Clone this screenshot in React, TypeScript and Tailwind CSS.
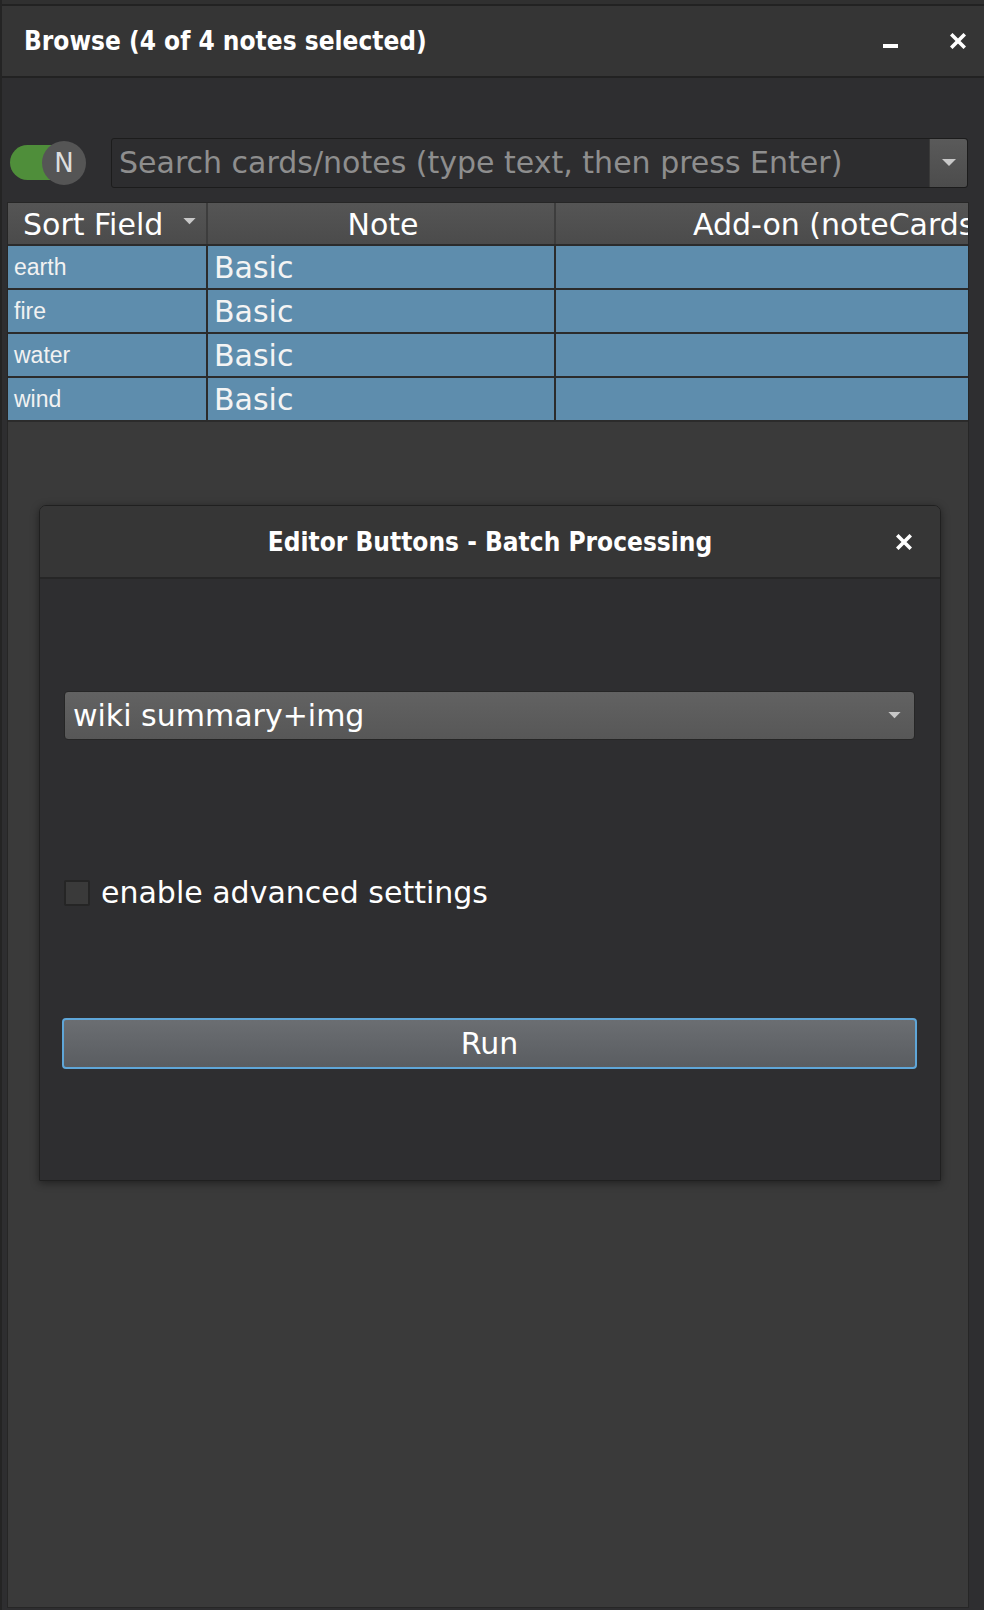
import React from "react";

const dv = "font-['DejaVu_Sans',sans-serif] leading-none";
const dvc = "font-['DejaVu_Sans_Condensed','DejaVu_Sans',sans-serif] font-stretch-condensed font-bold leading-none";

function XIcon({ className }: { className?: string }) {
  return (
    <svg viewBox="0 0 16 16" className={className} fill="none">
      <path d="M2.5 2.5 L13.5 13.5 M13.5 2.5 L2.5 13.5" stroke="#ffffff" strokeWidth="3.6" strokeLinecap="square" />
    </svg>
  );
}

function Tri({ className }: { className?: string }) {
  return (
    <svg viewBox="0 0 14 8" className={className}>
      <path d="M0 0 H14 L7 7 Z" fill="#c8c8c8" />
    </svg>
  );
}

const rows = ["earth", "fire", "water", "wind"];

export default function App() {
  return (
    <div className="w-[984px] h-[1610px] bg-[#2e2e30] flex flex-col overflow-hidden border-l-2 border-[#242424]">
      <div className="h-[4px] bg-[#303030]" />
      {/* Title bar */}
      <div className="h-[74px] border-y-2 border-[#222222] bg-[#353535] flex items-center pl-[22px] pr-[18px]">
        <div className={`${dvc} text-[26px] text-white flex-1`}>Browse (4 of 4 notes selected)</div>
        <div className="w-[15px] h-[4px] bg-white mt-[10px] mr-[52px]" />
        <XIcon className="w-[16px] h-[16px]" />
      </div>
      {/* Toolbar */}
      <div className="h-[124px] pt-[60px] pb-[14px] flex">
        <div className="h-[50px] flex items-center w-full pl-[8px] pr-[16px]">
          <div className="relative w-[76px] h-[44px] shrink-0">
            <div className="absolute left-0 top-[4px] w-[60px] h-[35px] rounded-full bg-[#4f8e3a]" />
            <div className={`absolute right-0 top-0 w-[44px] h-[44px] rounded-full bg-[#555555] flex items-center justify-center text-[#dddddd] text-[26px] ${dv}`}>N</div>
          </div>
          <div className="ml-[25px] flex-1 h-[50px] border border-[#1c1c1c] rounded-[3px] bg-[#2d2d2f] flex items-stretch">
            <div className={`flex-1 flex items-center pl-[7px] text-[30px] text-[#8e8e8e] ${dv} whitespace-nowrap overflow-hidden`}>
              Search cards/notes (type text, then press Enter)
            </div>
            <div className="w-[38px] bg-gradient-to-b from-[#5a5a5a] to-[#4c4c4c] border-l border-[#3a3a3a] rounded-r-[3px] flex items-center justify-center">
              <Tri className="w-[14px] h-[8px]" />
            </div>
          </div>
        </div>
      </div>
      {/* Table */}
      <div className="flex-1 ml-[5px] mr-[15px] mb-[2px] border border-[#262626] bg-[#3a3a3a] flex flex-col relative">
        <div className="grid grid-cols-[198px_346px_1fr] grid-rows-[41px] gap-x-[2px] bg-[#3d3d3d] h-[43px] border-b-2 border-[#2b2b2b]">
          <div className={`bg-gradient-to-b from-[#555555] to-[#4b4b4b] flex items-center pt-[2px] pl-[15px] pr-[10px] text-[30px] text-white ${dv}`}>
            <span className="flex-1">Sort Field</span>
            <Tri className="w-[13px] h-[7px] mb-[6px]" />
          </div>
          <div className={`bg-gradient-to-b from-[#555555] to-[#4b4b4b] flex items-center justify-center pt-[2px] pl-[4px] text-[30px] text-white ${dv}`}>Note</div>
          <div className={`bg-gradient-to-b from-[#555555] to-[#4b4b4b] flex items-center pt-[2px] pl-[137px] text-[30px] text-white ${dv} whitespace-nowrap overflow-hidden`}>Add-on (noteCards)</div>
        </div>
        {rows.map((r) => (
          <div key={r} className="grid grid-cols-[198px_346px_1fr] grid-rows-[42px] gap-x-[2px] bg-[#2b2b2b] h-[44px] border-b-2 border-[#2b2b2b]">
            <div className="bg-[#5e8dad] flex items-center pt-[1px] pl-[6px] text-[23px] leading-none text-[#f2f2f2] font-['Liberation_Sans',sans-serif]">{r}</div>
            <div className={`bg-[#5e8dad] flex items-center pt-[1px] pl-[6px] text-[30px] text-[#f4f4f4] ${dv}`}>Basic</div>
            <div className="bg-[#5e8dad]" />
          </div>
        ))}

        {/* Dialog */}
        <div className="absolute left-[31px] top-[302px] w-[902px] h-[676px] rounded-t-[7px] border border-[#202020] shadow-[0_2px_8px_rgba(0,0,0,0.45)] flex flex-col overflow-hidden">
          <div className="h-[73px] bg-[#363636] border-b-2 border-[#262626] flex items-center relative">
            <div className={`${dvc} text-[26px] text-white w-full text-center`}>Editor Buttons - Batch Processing</div>
            <XIcon className="absolute right-[28px] top-[28px] w-[16px] h-[16px]" />
          </div>
          <div className="flex-1 bg-[#2e2e30] pt-[112px] pl-[24px] pr-[25px] flex flex-col">
            <div className="h-[49px] rounded-[4px] border border-[#262626] bg-gradient-to-b from-[#626262] to-[#575757] flex items-center pl-[8px] pr-[13px]">
              <span className={`flex-1 text-[30px] text-white ${dv}`}>wiki summary+img</span>
              <Tri className="w-[13px] h-[7px]" />
            </div>
            <div className="mt-[140px] h-[26px] flex items-center">
              <div className="w-[26px] h-[26px] bg-[#3a3a3a] border-2 border-[#252525] rounded-[2px]" />
              <span className={`ml-[11px] text-[30px] text-white ${dv}`}>enable advanced settings</span>
            </div>
            <div className="mt-[112px] -mx-[2px] h-[51px] rounded-[4px] border-2 border-[#5fa6d8] bg-gradient-to-b from-[#6b6e72] to-[#5a5d61] flex items-center justify-center">
              <span className={`text-[30px] text-white ${dv}`}>Run</span>
            </div>
          </div>
        </div>
      </div>
    </div>
  );
}
